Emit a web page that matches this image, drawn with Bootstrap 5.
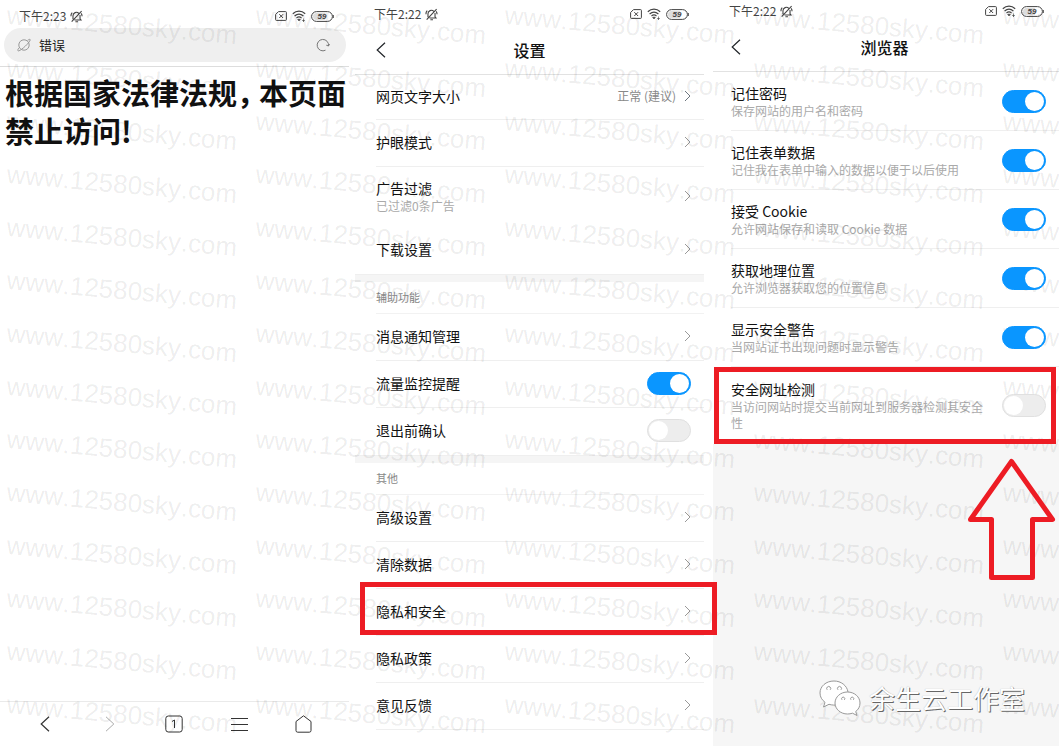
<!DOCTYPE html>
<html lang="zh-CN">
<head>
<meta charset="utf-8">
<meta name="viewport" content="width=device-width, initial-scale=1">
<title>浏览器设置</title>
<link rel="stylesheet" href="https://cdn.jsdelivr.net/npm/bootstrap@5.3.0/dist/css/bootstrap.min.css">
<style>
body{font-family:"Noto Sans CJK SC",sans-serif;font-size:14px;line-height:20px;color:#111;background:#fff}
svg{display:block;fill:none;stroke:currentColor}
.stage{display:grid;grid-template-columns:repeat(3,minmax(0,1fr));gap:6px}
.statusbar{height:28px;padding:0 15px 0 19px;font-size:12px;color:#444;flex:none}
.statusbar .icons{gap:5px}
.web{padding-top:2px}
.addr{height:34px;margin:0 3px 0 4px;padding:0 16px 0 13px;background:#efefef;color:#999}
.addr input{min-width:0;font-size:13px;line-height:20px;color:#222;outline:0}
.addr .btn{color:#777}
.addr-wrap{margin-top:-2px;padding-bottom:4px;border-bottom:1px solid #ddd}
.blocked{font-size:29px;line-height:38px;font-weight:700;margin:6px 0 0;padding-left:5px;color:#111}
.blocked span{display:inline-block;width:22px}
.tools{height:45px;padding:0 13px;border-top:1px solid #eaeaea}
.tools .btn{flex:1 1 0;color:#333}
.tools .btn.off{color:#aaa}
.titlebar{height:47px;padding:0 21px 3px;border-bottom:1px solid #e2e2e2;flex:none}
.titlebar h1{font-size:16px;line-height:20px;font-weight:500;color:#111}
.titlebar i{width:10px}
.item{height:47px;margin-left:21px;padding:0 13px 2px 0;border-bottom:1px solid #efefef;color:#111;text-decoration:none}
.item.first{height:45px}
.item.tall{height:60px;border-bottom-color:transparent}
.item.flush{border-bottom-color:transparent}
.item svg{color:#999}
.hint{font-size:12px;line-height:16px;color:#aaa;max-width:256px}
.val{font-size:12px;color:#888;margin-right:8px}
.band{height:8px;background:#f5f5f5;border-top:1px solid #efefef}
.group-name{height:32px;margin:0 0 0 21px;font-size:11px;line-height:30px;font-weight:400;color:#888;border-bottom:1px solid #f2f2f2}
.form-check-input.sw{position:relative;z-index:2;width:44px;height:23px;margin:0;border:1px solid #e0e0e0;border-radius:12px;background:#ededed;flex:none;box-shadow:none}
.form-check-input.sw::after{content:"";position:absolute;left:1px;top:1px;width:19px;height:19px;border-radius:50%;background:#fff}
.form-check-input.sw:checked{background:#0a96ff;border-color:#0a96ff}
.form-check-input.sw:checked::after{left:auto;right:1px}
.privacy{background:#f6f6f6;border-left:3px solid #fff}
.privacy .statusbar{height:22px;padding-left:16px}
.privacy .titlebar{height:50px;padding:0 21px 0 18px}
.privacy .item{height:59px;margin-left:18px;padding-bottom:0}
.privacy .item.last{height:77px;border:0}
.privacy .item label{line-height:19px}
.marker{position:absolute;border:5px solid #ed1c24;z-index:3;pointer-events:none}
.marker.m1{left:-16px;right:-13px;top:-7px;bottom:0}
.marker.m2{left:-17px;right:3px;top:0;bottom:0}
.item .arrow{position:absolute;right:2px;top:90px;z-index:3;color:#ed1c24}
.brand{gap:8px;padding:0 34px 30px 0;z-index:3}
.brand svg{color:#999}
.brand b{font-size:26px;line-height:36px;font-weight:400;color:#fff;text-shadow:1px 1px 0 #666,0 0 1px #aaa}
.wm-clip{position:absolute;inset:0;overflow:hidden;pointer-events:none;z-index:1}
.wm{display:grid;grid-template-columns:repeat(5,249px);grid-auto-rows:53px;padding-left:6px}
.wm span{font:26px/30px "Liberation Sans",sans-serif;font-kerning:none;color:rgba(0,0,0,.08);transform:rotate(5deg);transform-origin:0 24px;white-space:nowrap}
</style>
</head>
<body>
<svg width="0" height="0" class="position-absolute" aria-hidden="true">
<symbol id="mute" viewBox="0 0 14 14"><path stroke-width="1.200" d="M3.200 10V6.200a3.700 3.700 0 0 1 6.300-2.600M10.800 5.500V9.500l1 1.200H4.800M5.800 12.600h2.800M1 6.800C.9 5.200 1.400 3.800 2.400 2.800M13 6.800c0-1.300-.3-2.300-1-3.200M12.500 1.300 1.800 12.600"/></symbol>
<symbol id="nosim" viewBox="0 0 12 10"><path d="M3.500.6h7.100q.8 0 .8.8v7.200q0 .8-.8.8H1.400q-.8 0-.8-.8V3.500zM4.300 3.200l3.800 3.800M8.100 3.200 4.300 7"/></symbol>
<symbol id="wifi" viewBox="0 0 14 12"><path stroke-width="1.200" d="M.8 3.800C4.500.3 9.500.3 13.200 3.800M2.600 6c2.700-2.400 6.100-2.400 8.800 0M4.500 8c1.600-1.300 3.400-1.300 5 0"/><path d="M5.600 9.500 7 11l1.400-1.500Q7 8.500 5.600 9.500zM11.500 8.500v3M10.300 10.300l1.200 1.200 1.200-1.200" fill="currentColor" stroke-width=".6"/></symbol>
<symbol id="batt" viewBox="0 0 23 11"><rect x=".6" y=".6" width="20.800" height="9.800" rx="4.900"/><path d="M22.300 4v3"/><path d="M5 2h9v7H5Q2 8.500 2 5.500T5 2z" fill="#ddd" stroke="none"/><text x="11" y="8.300" text-anchor="middle" font-size="8" font-weight="700" font-style="italic" font-family="Liberation Sans, sans-serif" fill="#444" stroke="none">59</text></symbol>
<symbol id="go" viewBox="0 0 7 12"><path d="M1 1l5 5-5 5"/></symbol>
<symbol id="back" viewBox="0 0 10 16"><path d="M9 .8 1.200 8 9 15.200" stroke-width="1.200"/></symbol>
</svg>

<div class="position-relative">
<main class="stage min-vh-100">

  <section class="web d-flex flex-column">
    <div class="statusbar d-flex align-items-center"><span>下午2:23</span><svg width="13" height="13" class="ms-1"><use href="#mute"/></svg>
      <div class="icons d-flex align-items-center ms-auto"><svg width="12" height="10"><use href="#nosim"/></svg><svg width="14" height="12"><use href="#wifi"/></svg><svg width="23" height="11"><use href="#batt"/></svg></div></div>
    <div class="addr-wrap">
      <div class="addr rounded-pill d-flex align-items-center">
        <svg width="14" height="14" viewBox="0 0 14 14" aria-hidden="true"><circle cx="7" cy="7" r="5.200"/><path d="M10.500 2.400c1.700-1.200 2.900-1.400 2.700-.4C12.700 4.500 4.500 12.300 1.600 12.900.4 13 .6 11.600 1.900 9.900"/></svg>
        <input type="text" class="flex-fill border-0 bg-transparent p-0 ms-2" value="错误" aria-label="地址">
        <button type="button" class="btn p-0 border-0" aria-label="刷新"><svg width="14" height="14" viewBox="0 0 14 14"><path d="M9.500 12.200A5.700 5.700 0 1 1 12.500 8M10.300 7.200l2.200.8 1-2"/></svg></button>
      </div>
    </div>
    <h2 class="blocked">根据国家法律法规<span>，</span>本页面禁止访问!</h2>
    <nav class="tools d-flex mt-auto" aria-label="工具栏">
      <button type="button" class="btn p-0 border-0 d-flex align-items-center justify-content-center" aria-label="后退"><svg width="10" height="16"><use href="#back"/></svg></button>
      <button type="button" class="btn off p-0 border-0 d-flex align-items-center justify-content-center" aria-label="前进"><svg width="10" height="16" viewBox="0 0 10 16"><path d="M1 .8 8.800 8 1 15.200"/></svg></button>
      <button type="button" class="btn p-0 border-0 d-flex align-items-center justify-content-center" aria-label="标签页"><svg width="18" height="18" viewBox="0 0 18 18"><rect x=".8" y="1" width="16.400" height="16" rx="2.500"/><path d="M7 6.500 9.500 5v8"/></svg></button>
      <button type="button" class="btn p-0 border-0 d-flex align-items-center justify-content-center" aria-label="菜单"><svg width="17" height="15" viewBox="0 0 17 15"><path d="M0 1.500h17M0 7.500h17M0 13.500h17"/></svg></button>
      <button type="button" class="btn p-0 border-0 d-flex align-items-center justify-content-center" aria-label="主页"><svg width="17" height="18" viewBox="0 0 17 18"><path d="M1 6.500 8.500.8 16 6.500v9q0 1.700-1.700 1.700H2.700Q1 17.200 1 15.500z"/></svg></button>
    </nav>
  </section>

  <section>
    <div class="statusbar d-flex align-items-center"><span>下午2:22</span><svg width="13" height="13" class="ms-1"><use href="#mute"/></svg>
      <div class="icons d-flex align-items-center ms-auto"><svg width="12" height="10"><use href="#nosim"/></svg><svg width="14" height="12"><use href="#wifi"/></svg><svg width="23" height="11"><use href="#batt"/></svg></div></div>
    <header class="titlebar d-flex align-items-center justify-content-between"><button type="button" class="btn p-0 border-0" aria-label="返回"><svg width="10" height="16"><use href="#back"/></svg></button><h1 class="m-0">设置</h1><i></i></header>
    <a href="#" class="item first d-flex align-items-center"><span class="me-auto">网页文字大小</span><span class="val">正常 (建议)</span><svg width="7" height="12" class="text-secondary"><use href="#go"/></svg></a>
    <a href="#" class="item d-flex align-items-center"><span class="me-auto">护眼模式</span><svg width="7" height="12"><use href="#go"/></svg></a>
    <a href="#" class="item tall d-flex align-items-center"><span class="d-flex flex-column me-auto"><span>广告过滤</span><span class="hint">已过滤0条广告</span></span><svg width="7" height="12"><use href="#go"/></svg></a>
    <a href="#" class="item flush d-flex align-items-center"><span class="me-auto">下载设置</span><svg width="7" height="12"><use href="#go"/></svg></a>
    <div class="band"></div>
    <h2 class="group-name">辅助功能</h2>
    <a href="#" class="item d-flex align-items-center"><span class="me-auto">消息通知管理</span><svg width="7" height="12"><use href="#go"/></svg></a>
    <div class="item d-flex align-items-center"><label for="s1" class="me-auto">流量监控提醒</label><input id="s1" type="checkbox" class="form-check-input sw" checked></div>
    <div class="item flush d-flex align-items-center"><label for="s2" class="me-auto">退出前确认</label><input id="s2" type="checkbox" class="form-check-input sw"></div>
    <div class="band"></div>
    <h2 class="group-name">其他</h2>
    <a href="#" class="item d-flex align-items-center"><span class="me-auto">高级设置</span><svg width="7" height="12"><use href="#go"/></svg></a>
    <a href="#" class="item d-flex align-items-center"><span class="me-auto">清除数据</span><svg width="7" height="12"><use href="#go"/></svg></a>
    <a href="#" class="item d-flex align-items-center position-relative"><span class="me-auto">隐私和安全</span><svg width="7" height="12"><use href="#go"/></svg><span class="marker m1"></span></a>
    <a href="#" class="item d-flex align-items-center"><span class="me-auto">隐私政策</span><svg width="7" height="12"><use href="#go"/></svg></a>
    <a href="#" class="item d-flex align-items-center"><span class="me-auto">意见反馈</span><svg width="7" height="12"><use href="#go"/></svg></a>
  </section>

  <section class="privacy d-flex flex-column">
    <div class="bg-white">
    <div class="statusbar d-flex align-items-center"><span>下午2:22</span><svg width="13" height="13" class="ms-1"><use href="#mute"/></svg>
      <div class="icons d-flex align-items-center ms-auto"><svg width="12" height="10"><use href="#nosim"/></svg><svg width="14" height="12"><use href="#wifi"/></svg><svg width="23" height="11"><use href="#batt"/></svg></div></div>
    <header class="titlebar d-flex align-items-center justify-content-between"><button type="button" class="btn p-0 border-0" aria-label="返回"><svg width="10" height="16"><use href="#back"/></svg></button><h1 class="m-0">浏览器</h1><i></i></header>
    <div class="item d-flex align-items-center"><div class="me-auto d-flex flex-column"><label for="p1">记住密码</label><span class="hint">保存网站的用户名和密码</span></div><input id="p1" type="checkbox" class="form-check-input sw" checked></div>
    <div class="item d-flex align-items-center"><div class="me-auto d-flex flex-column"><label for="p2">记住表单数据</label><span class="hint">记住我在表单中输入的数据以便于以后使用</span></div><input id="p2" type="checkbox" class="form-check-input sw" checked></div>
    <div class="item d-flex align-items-center"><div class="me-auto d-flex flex-column"><label for="p3">接受 Cookie</label><span class="hint">允许网站保存和读取 Cookie 数据</span></div><input id="p3" type="checkbox" class="form-check-input sw" checked></div>
    <div class="item d-flex align-items-center"><div class="me-auto d-flex flex-column"><label for="p4">获取地理位置</label><span class="hint">允许浏览器获取您的位置信息</span></div><input id="p4" type="checkbox" class="form-check-input sw" checked></div>
    <div class="item d-flex align-items-center"><div class="me-auto d-flex flex-column"><label for="p5">显示安全警告</label><span class="hint">当网站证书出现问题时显示警告</span></div><input id="p5" type="checkbox" class="form-check-input sw" checked></div>
    <div class="item last d-flex align-items-center position-relative"><div class="me-auto d-flex flex-column"><label for="p6">安全网址检测</label><span class="hint">当访问网站时提交当前网址到服务器检测其安全性</span></div><input id="p6" type="checkbox" class="form-check-input sw"><span class="marker m2"></span>
      <svg class="arrow" width="90" height="124" viewBox="0 0 90 124" stroke-width="5" stroke-linejoin="round" aria-hidden="true"><path d="M44.500 4.500 85.500 62.500H65.500V120.500H24.500V62.500H3.500Z"/></svg></div>
    </div>
    <footer class="brand position-relative d-flex align-items-center justify-content-end mt-auto">
      <svg width="42" height="36" viewBox="0 0 42 36" aria-hidden="true"><path fill="#fff" d="M15 1C7 1 1 6.300 1 13c0 4 2 7 5 9.300L4.500 27 10 24.300c3 .9 6 1 9 .5L29 12C28 5.500 22 1 15 1z"/><path fill="#fff" d="M28.500 12C21.500 12 16 17 16 23s5.500 11 12.500 11q2.500 0 5-.8l4.500 2.300-1.300-4C39.500 29.500 41 26.500 41 23c0-6-5.500-11-12.500-11z"/><path d="M8.200 9.800a2 2 0 1 1 3 0M19 9.800a2 2 0 1 1 3 0M23 19.800a1.600 1.600 0 1 1 2.400 0M32 19.800a1.600 1.600 0 1 1 2.400 0"/></svg>
      <b>余生云工作室</b>
    </footer>
  </section>
</main>
<div class="wm-clip" aria-hidden="true"><div class="wm" id="wm"></div></div>
</div>
<script>
// Tile the site watermark over the whole page.
var wm = document.getElementById('wm');
for (var i = 0; i < 5 * 14; i++) {
  var s = document.createElement('span');
  s.textContent = 'www.12580sky.com';
  wm.appendChild(s);
}
</script>
<script src="https://cdn.jsdelivr.net/npm/bootstrap@5.3.0/dist/js/bootstrap.bundle.min.js"></script>
</body>
</html>
